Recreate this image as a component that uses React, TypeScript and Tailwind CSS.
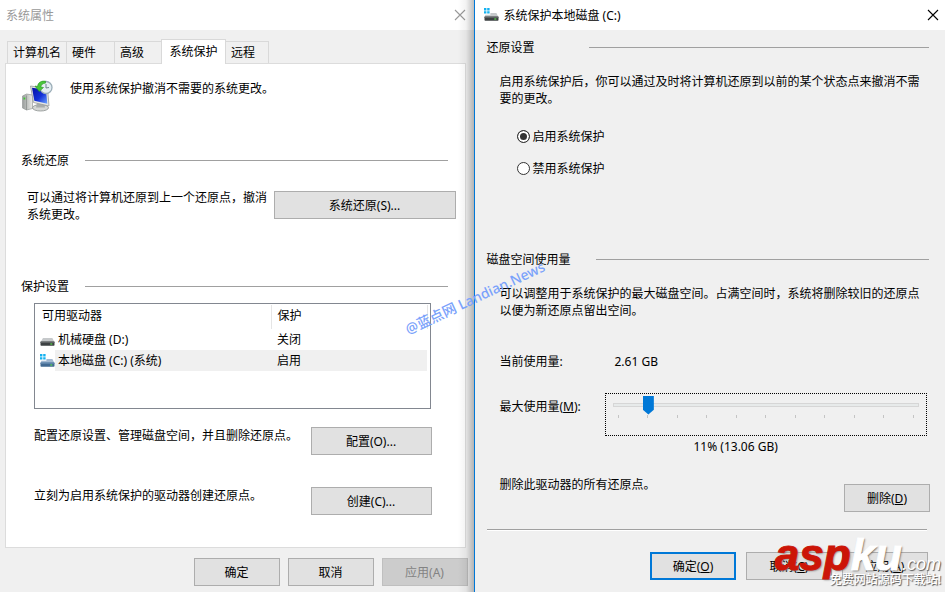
import type { ReactNode } from "react";

const TABS = ["计算机名", "硬件", "高级", "系统保护", "远程"];
const TAB_WIDTHS = ["w-[60px]", "w-[49px]", "w-[48px]", "w-[65px]", "w-[44px]"];
const TICKS = Array.from({ length: 11 }, (_, i) => i);

function CloseIcon({ className }: { className: string }) {
  return (
    <svg viewBox="0 0 12 12" className={"size-3 " + className} fill="none" stroke="currentColor" strokeWidth="1.1">
      <path d="M1 1 11 11M11 1 1 11" />
    </svg>
  );
}

function DriveIcon({ system = false, blue = false }: { system?: boolean; blue?: boolean }) {
  return (
    <svg viewBox="0 0 16 14" className="h-3.5 w-4 shrink-0">
      {system && (
        <path fill="#13b1f0" d="M1 0h2.4v2.4H1zM4.2 0h2.4v2.4H4.2zM1 3.200h2.4v2.4H1zM4.2 3.200h2.4v2.4H4.2z" />
      )}
      <path d={system ? "M7.4 5h6l2 4H1.6l.8-2.200h5z" : "M4 5h9.4l2 4H1.6z"} fill={blue ? "#a3b9d2" : "#c6c9cb"} />
      <rect x="1.5" y="8.6" width="14" height="4.2" rx=".7" fill={blue ? "#426a92" : "#3d4143"} />
      <rect x="1.5" y="8.6" width="14" height="1" fill={blue ? "#6f93b8" : "#74787a"} />
      <rect x="11.3" y="10.4" width="2" height="1.2" fill="#58e04b" />
    </svg>
  );
}

function RestoreIcon() {
  return (
    <svg viewBox="0 0 32 32" className="size-8 shrink-0">
      <defs>
        <linearGradient id="screen" x1="0" y1="0" x2="1" y2="1">
          <stop offset="0" stopColor="#0410a4" />
          <stop offset=".55" stopColor="#1431d8" />
          <stop offset="1" stopColor="#6ea6ff" />
        </linearGradient>
        <linearGradient id="tower" x1="0" y1="0" x2="1" y2="0">
          <stop offset="0" stopColor="#999d9c" />
          <stop offset="1" stopColor="#ecece9" />
        </linearGradient>
      </defs>
      <path d="M1.500 16l4-2 6 1v13.500l-6 1.500-4-2z" fill="url(#tower)" stroke="#979b9a" strokeWidth=".7" />
      <path d="M5.500 15.500V30" stroke="#858988" strokeWidth=".7" />
      <rect x="2.500" y="17.500" width="1.800" height="2" fill="#3fc733" />
      <ellipse cx="19.500" cy="27.800" rx="8" ry="3.200" fill="#d5d7d5" stroke="#8c908f" strokeWidth=".8" />
      <path d="M16 23h7l1 4.500h-9z" fill="#a9adac" />
      <path d="M9.500 6l17 2.500 1.500 17.500-15.500-3.500z" fill="#e6e7e5" stroke="#979b9a" strokeWidth=".8" />
      <path d="M11 7.800l14 2 1.300 14-13-3z" fill="url(#screen)" />
      <circle cx="25" cy="7.500" r="6" fill="#e4edf2" stroke="#9caeb8" strokeWidth="1.300" />
      <path d="M25 4v4l3-.5" fill="none" stroke="#71838e" strokeWidth="1" />
      <path d="M24.500 1.200C19.500.5 17 3 16.500 6.500L14 6l4.200 5.500L22.500 7.500l-2.700-.4c.4-2.200 1.700-3.700 4.700-4z" fill="#49c63b" stroke="#299322" strokeWidth=".6" />
    </svg>
  );
}

function Btn({ children, className = "w-[86px]", disabled }: { children: ReactNode; className?: string; disabled?: boolean }) {
  const tone = disabled
    ? "border border-[#bfbfbf] bg-[#cccccc] text-[#838383]"
    : "border border-[#adadad] bg-[#e1e1e1]";
  return (
    <button type="button" disabled={disabled} className={`flex h-7 shrink-0 items-center justify-center ${tone} ${className}`}>
      <span>{children}</span>
    </button>
  );
}

function Heading({ children, className = "gap-4" }: { children: ReactNode; className?: string }) {
  return (
    <div className={"flex items-center " + className}>
      <h2 className="shrink-0">{children}</h2>
      <div className="h-px flex-1 bg-[#a0a0a0]" />
    </div>
  );
}

function PropertiesWindow() {
  return (
    <section className="relative flex min-w-0 flex-[474] flex-col">
      <header className="flex h-[30px] items-center justify-between bg-white pr-2 pl-1.5 text-[#999999]">
        <h1>系统属性</h1>
        <button type="button" aria-label="关闭窗口">
          <CloseIcon className="text-[#999999]" />
        </button>
      </header>
      <div className="flex flex-1 flex-col pt-[9px] pr-2 pb-1.5 pl-[5px]">
        <div role="tablist" className="flex items-end pl-0.5">
          {TABS.map((tab, i) =>
            i === 3 ? (
              <button key={tab} type="button" role="tab" aria-selected="true" className={"z-10 -mb-px -ml-px h-[25px] border border-b-0 border-[#d9d9d9] bg-white pb-0.5 " + TAB_WIDTHS[i]}>
                {tab}
              </button>
            ) : (
              <button key={tab} type="button" role="tab" aria-selected="false" className={"-ml-px h-[22px] border border-b-0 border-[#d9d9d9] pl-[5px] text-left first:ml-0 " + TAB_WIDTHS[i]}>
                {tab}
              </button>
            ),
          )}
        </div>
        <div className="flex-1 border border-[#dcdcdc] bg-white pt-4 pl-[15px]">
          <div className="flex gap-[17px]">
            <RestoreIcon />
            <p>使用系统保护撤消不需要的系统更改。</p>
          </div>
          <Heading className="mt-10 mr-[17px] gap-4">系统还原</Heading>
          <div className="mt-5 mr-[9px] ml-1.5 flex items-start gap-1">
            <p className="flex-1">可以通过将计算机还原到上一个还原点，撤消系统更改。</p>
            <Btn className="mt-0.5 w-[182px]">系统还原(S)...</Btn>
          </div>
          <Heading className="mt-[55px] mr-[17px] gap-4">保护设置</Heading>
          <div className="mt-2 mr-[34px] ml-[13px] h-[106px] border border-[#828790] pt-px pr-0.5">
            <table className="w-full table-fixed border-collapse text-left">
              <thead>
                <tr className="h-6">
                  <th className="w-[236px] border-r border-[#e5e5e5] pb-1 pl-[7px] font-normal">可用驱动器</th>
                  <th className="border-r border-[#e5e5e5] pb-1 pl-1.5 font-normal">保护</th>
                </tr>
              </thead>
              <tbody>
                <tr className="h-[21px]">
                  <td className="pl-1">
                    <div className="flex items-center gap-[3px]">
                      <DriveIcon />
                      <span>机械硬盘 (D:)</span>
                    </div>
                  </td>
                  <td className="pl-1.5">关闭</td>
                </tr>
                <tr className="h-[21px]">
                  <td className="pl-1">
                    <div className="flex h-[21px] items-center">
                      <DriveIcon system blue />
                      <span className="flex h-full flex-1 items-center bg-[#f0f0f0] pl-[3px]">本地磁盘 (C:) (系统)</span>
                    </div>
                  </td>
                  <td className="bg-[#f0f0f0] pl-1.5">启用</td>
                </tr>
              </tbody>
            </table>
          </div>
          <div className="mt-[18px] mr-[33px] ml-[13px] flex items-start justify-between">
            <p>配置还原设置、管理磁盘空间，并且删除还原点。</p>
            <Btn className="w-[121px]">配置(O)...</Btn>
          </div>
          <div className="mt-8 mr-[33px] mb-8 ml-[13px] flex items-start justify-between">
            <p>立刻为启用系统保护的驱动器创建还原点。</p>
            <Btn className="w-[121px]">创建(C)...</Btn>
          </div>
        </div>
        <footer className="-mr-0.5 mt-2.5 flex justify-end gap-2">
          <Btn>确定</Btn>
          <Btn>取消</Btn>
          <Btn disabled>应用(A)</Btn>
        </footer>
      </div>
      <div className="pointer-events-none absolute inset-y-0 right-0 z-20 w-4 bg-linear-to-r from-transparent via-black/5 to-black/25" />
    </section>
  );
}

function RadioOption({ label, checked, className }: { label: string; checked?: boolean; className: string }) {
  return (
    <label className={"ml-[30px] flex items-center gap-[3px] " + className}>
      <input
        type="radio"
        name="protection"
        defaultChecked={checked}
        className="size-[13px] appearance-none rounded-full border border-[#333333] bg-white checked:bg-[#333333] checked:shadow-[inset_0_0_0_2px_#ffffff]"
      />
      {label}
    </label>
  );
}

function ProtectionWindow() {
  return (
    <section className="flex min-w-0 flex-[471] flex-col border-l border-[#0078d7]">
      <header className="flex h-[30px] items-center bg-white pr-1.5 pl-2">
        <DriveIcon system />
        <h1 className="ml-[5px] flex-1">系统保护本地磁盘 (C:)</h1>
        <button type="button" aria-label="关闭窗口">
          <CloseIcon className="text-black" />
        </button>
      </header>
      <div className="flex-1 pt-[9px] pr-4 pb-3 pl-3">
        <Heading className="gap-[54px]">还原设置</Heading>
        <p className="mt-[17px] ml-[13px]">启用系统保护后，你可以通过及时将计算机还原到以前的某个状态点来撤消不需要的更改。</p>
        <RadioOption label="启用系统保护" checked className="mt-[21px]" />
        <RadioOption label="禁用系统保护" className="mt-[15px]" />
        <Heading className="mt-[74px] gap-[25px]">磁盘空间使用量</Heading>
        <p className="mt-[17px] ml-[13px]">可以调整用于系统保护的最大磁盘空间。占满空间时，系统将删除较旧的还原点以便为新还原点留出空间。</p>
        <div className="mt-[34px] ml-[13px] flex">
          <span className="w-[115px]">当前使用量:</span>
          <span>2.61 GB</span>
        </div>
        <div className="mt-[23px] mr-0.5 ml-[13px] flex items-start">
          <label htmlFor="max-usage" className="w-[105px] shrink-0 pt-[5px]">
            最大使用量(<u>M</u>):
          </label>
          <div className="h-[43px] flex-1 border border-dotted border-black px-[7px] pt-px">
            <input
              id="max-usage"
              type="range"
              min={0}
              max={100}
              defaultValue={10}
              className="block h-[19px] w-full appearance-none bg-transparent [&::-webkit-slider-runnable-track]:h-1 [&::-webkit-slider-runnable-track]:border [&::-webkit-slider-runnable-track]:border-[#d6d6d6] [&::-webkit-slider-runnable-track]:bg-[#e7eaea] [&::-webkit-slider-thumb]:-mt-2 [&::-webkit-slider-thumb]:h-[19px] [&::-webkit-slider-thumb]:w-[11px] [&::-webkit-slider-thumb]:appearance-none [&::-webkit-slider-thumb]:bg-[#0078d7] [&::-webkit-slider-thumb]:[clip-path:polygon(0_0,100%_0,100%_75%,50%_100%,0_75%)]"
            />
            <div className="mt-px flex justify-between px-[5px]">
              {TICKS.map((t) => (
                <span key={t} className="h-[3px] w-px bg-[#c4c4c4]" />
              ))}
            </div>
          </div>
        </div>
        <output htmlFor="max-usage" className="mt-0.5 ml-[207px] block">
          11% (13.06 GB)
        </output>
        <div className="mt-[21px] -mr-px ml-[13px] flex items-start justify-between">
          <p>删除此驱动器的所有还原点。</p>
          <Btn className="mt-2 w-[86px]">
            删除(<u>D</u>)
          </Btn>
        </div>
        <div className="mt-[17px] mr-0.5 h-0.5 border-t border-[#a0a0a0] bg-white" />
        <footer className="mt-[21px] mr-px flex justify-end gap-2.5">
          <button type="button" className="h-7 w-[86px] border-2 border-[#0078d7] bg-[#e1e1e1]">
            确定(<u>O</u>)
          </button>
          <Btn>
            取消(<u>C</u>)
          </Btn>
          <Btn>
            应用(<u>A</u>)
          </Btn>
        </footer>
      </div>
    </section>
  );
}

export default function App() {
  return (
    <main className="relative flex min-h-screen overflow-hidden bg-[#f0f0f0] font-['Noto_Sans','Noto_Sans_CJK_SC',sans-serif] text-[12px] leading-[17px] text-black">
      <PropertiesWindow />
      <ProtectionWindow />
      <div className="pointer-events-none absolute top-[288px] left-[399px] z-30 -rotate-[25deg] text-[14px] leading-5 font-medium whitespace-nowrap text-[#7aa2fb]">
        @蓝点网 Landian.News
      </div>
      <div className="pointer-events-none absolute right-1 bottom-1 z-30 flex flex-col items-end whitespace-nowrap">
        <div className="flex items-baseline font-['Liberation_Sans',sans-serif] leading-[46px] italic">
          <span className="text-[44px] font-bold text-[#cc1507] [-webkit-text-stroke:1px_#cc1507] [text-shadow:1px_1px_2px_#777777]">asp</span>
          <span className="text-[44px] font-bold text-white [-webkit-text-stroke:1px_#ffffff] [text-shadow:1px_1px_2px_#555555]">ku</span>
          <span className="text-[18px] text-white [text-shadow:1px_1px_1px_#555555]">.com</span>
        </div>
        <div className="-mt-[15px] text-[12px] leading-4 font-medium text-white [text-shadow:1px_1px_1px_#555555]">免费网站源码下载站!</div>
      </div>
    </main>
  );
}
